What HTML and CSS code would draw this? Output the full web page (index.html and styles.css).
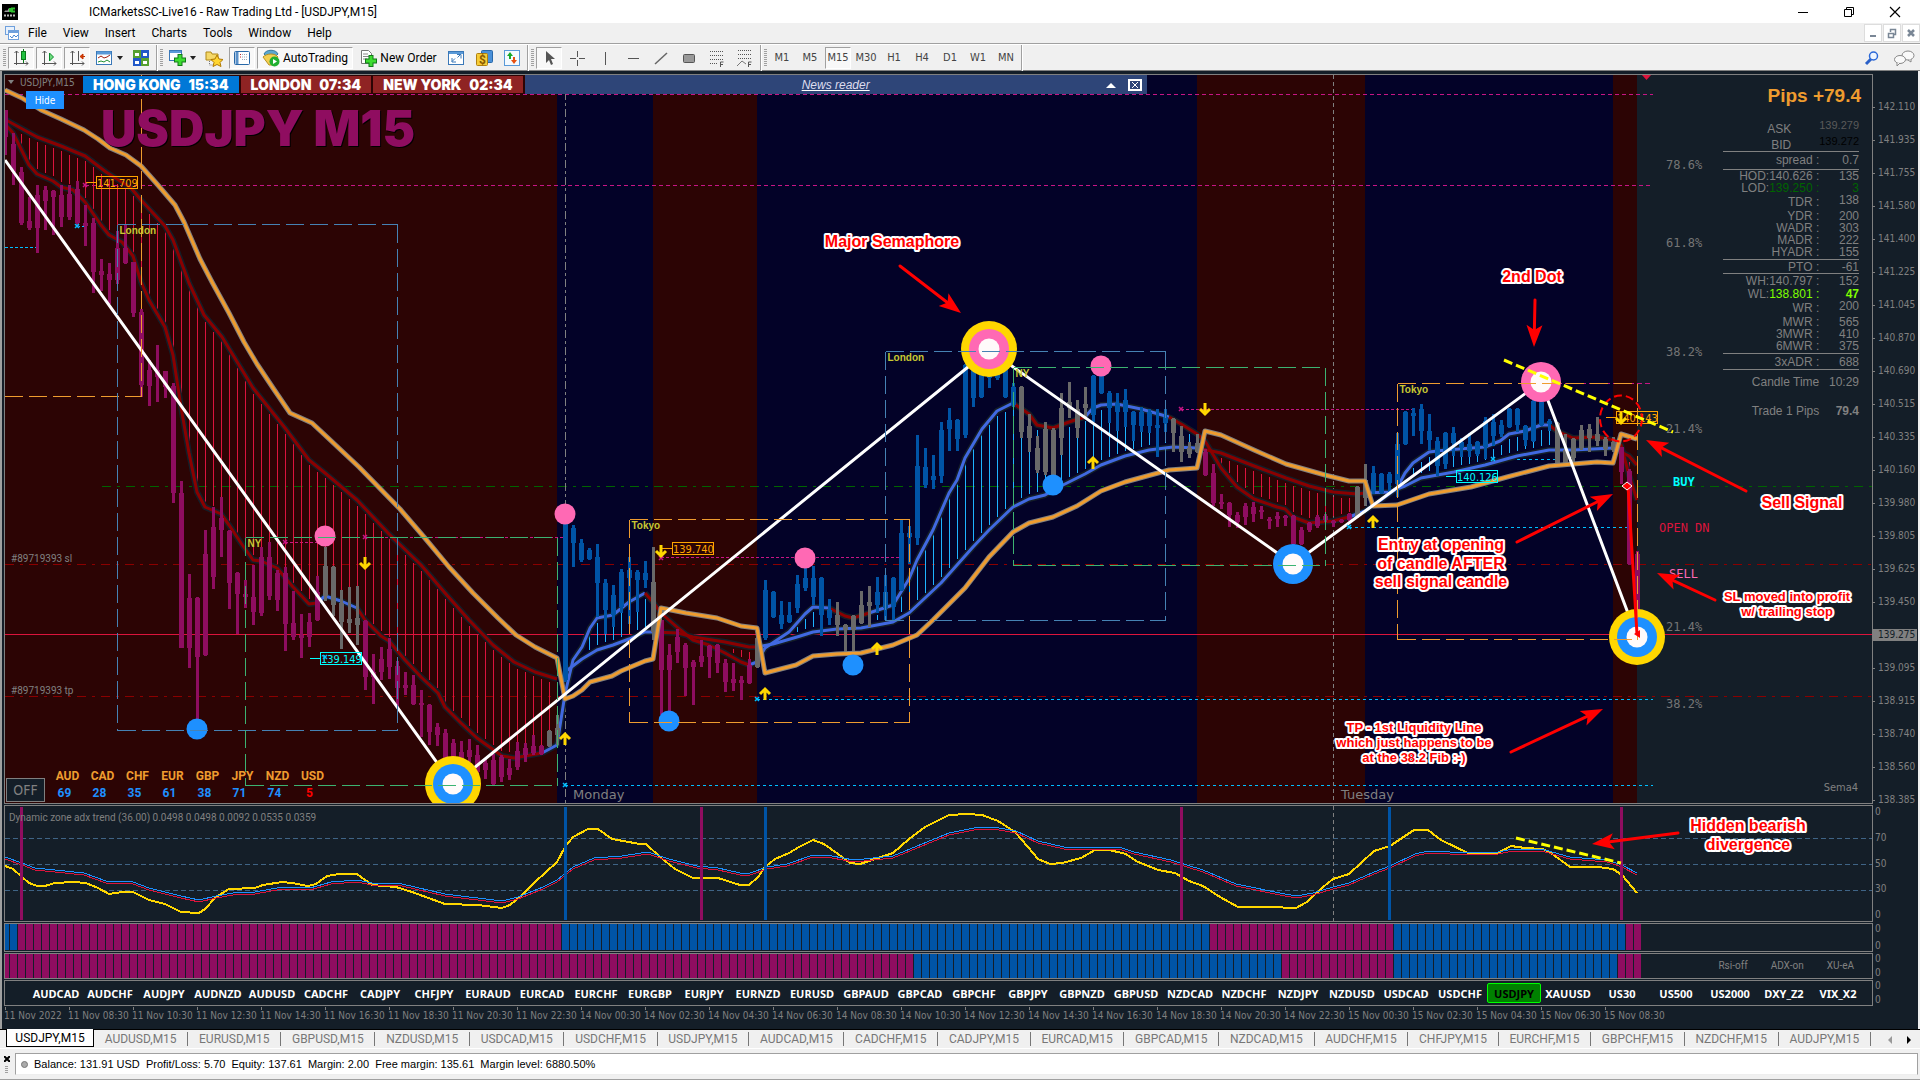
FILE: index.html
```html
<!DOCTYPE html>
<html lang="en">
    <head>
        <meta charset="utf-8" />
        <meta name="viewport" content="width=device-width, initial-scale=1" />
        <title>ICMarketsSC-Live16 - Raw Trading Ltd - [USDJPY,M15]</title>
        <link rel="stylesheet" href="styles.css">
    </head>
    <body>
        <div id="titlebar">
            <svg class="logo" width="16" height="16" viewBox="0 0 16 16"><rect width="16" height="16" fill="#000"/><path d="M2 8l2-2 1 1 2-3v4z" fill="#999"/><path d="M8 4v4M13 4.500h-3v3h3" stroke="#2fc12f" stroke-width="2" fill="none"/><path d="M2 11.500h12" stroke="#bbb" stroke-width="2" stroke-dasharray="2 1"/></svg>
            <div id="caption">ICMarketsSC-Live16 - Raw Trading Ltd - [USDJPY,M15]</div>
            <div class="winbuttons">
                <button aria-label="Minimize"><svg width="12" height="12"><path d="M1 6.500h10" stroke="#000"/></svg></button>
                <button aria-label="Restore"><svg width="12" height="12"><path d="M1.500 3.500h7v7h-7zM3.500 3V1.500h7v7H9" stroke="#000" fill="none"/></svg></button>
                <button aria-label="Close"><svg width="12" height="12"><path d="M1 1l10 10M11 1L1 11" stroke="#000" stroke-width="1.200"/></svg></button>
            </div>
        </div>
        <div id="menubar">
            <svg width="16" height="16"><rect x="1.500" y="1.500" width="9" height="8" fill="#e8f1fc" stroke="#6fa0dc"/><rect x="4.500" y="5.500" width="10" height="9" fill="#fff" stroke="#6fa0dc"/><path d="M5 7h9" stroke="#6fa0dc" stroke-width="2"/><path d="M6 11l2 2 2-3 2 2 2-2" stroke="#4a86d0" fill="none"/></svg>
            <a href="#">File</a><a href="#">View</a><a href="#">Insert</a><a href="#">Charts</a><a href="#">Tools</a><a href="#">Window</a><a href="#">Help</a>
            <div class="mdibuttons">
                <button aria-label="Minimize chart"><svg width="12" height="12"><path d="M3 9h6" stroke="#7a8796" stroke-width="2"/></svg></button>
                <button aria-label="Restore chart"><svg width="12" height="12"><path d="M2.500 6.500h5v4h-5zM4.500 5V2.500h5v5H8" stroke="#7a8796" stroke-width="1.500" fill="none"/></svg></button>
                <button aria-label="Close chart"><svg width="12" height="12"><path d="M3 3l6 6M9 3L3 9" stroke="#7a8796" stroke-width="2.500"/></svg></button>
            </div>
        </div>
        <div id="toolbar">
            <span class="grip"></span>
            <button class="on" aria-label="Candlesticks"><svg width="18" height="18"><path d="M4.500 2v14M2 14.500h14M2.500 4l2-2 2 2M14 12.500l2 2-2 2" stroke="#555" fill="none"/><path d="M11.500 0v14" stroke="#0a7a1a"/><rect x="9.500" y="2.500" width="4" height="8" fill="#22c040" stroke="#0a7a1a"/></svg></button>
            <button class="on" aria-label="Auto scroll"><svg width="18" height="18"><path d="M4.500 2v14M2 14.500h14M2.500 4l2-2 2 2M14 12.500l2 2-2 2" stroke="#555" fill="none"/><path d="M9.500 4v8l4-4z" fill="#6fdc80" stroke="#0a8a2a"/></svg></button>
            <button class="on" aria-label="Chart shift"><svg width="18" height="18"><path d="M4.500 2v14M2 14.500h14M2.500 4l2-2 2 2M14 12.500l2 2-2 2M10.500 2v10" stroke="#555" fill="none"/><path d="M17 7.500h-3M15 5l-3 2.500 3 2.500z" stroke="#c03000" fill="#e04000"/></svg></button>
            <button class="drop" aria-label="Templates"><svg width="18" height="18"><rect x="1.500" y="2.500" width="15" height="13" fill="#fff" stroke="#3a78b8"/><path d="M2 4h14" stroke="#5a9ad8" stroke-width="3"/><path d="M3 9l3-2 3 2 3-1 3-2" stroke="#a02010" fill="none"/><path d="M3 13l3-1 3 1 3-2 3 2" stroke="#209030" fill="none"/></svg><i class="caret"></i></button>
            <button aria-label="Tile windows"><svg width="18" height="18"><rect x="1" y="1" width="8" height="8" fill="#56a030"/><rect x="9" y="1" width="8" height="8" fill="#2058c8"/><rect x="1" y="9" width="8" height="8" fill="#2058c8"/><rect x="9" y="9" width="8" height="8" fill="#56a030"/><path d="M3 5.500h4M11 5.500h4M3 13.500h4M11 13.500h4" stroke="#fff" stroke-width="3"/></svg></button>
            <span class="sep"></span><span class="grip"></span>
            <button class="drop" aria-label="Indicators"><svg width="18" height="18"><rect x="1.500" y="1.500" width="12" height="10" fill="#fff" stroke="#3a78b8"/><path d="M2 3h11" stroke="#5a9ad8" stroke-width="2"/><path d="M12 5v12M6 11h12" stroke="#107818" stroke-width="5"/><path d="M12 6v10M7 11h10" stroke="#3ddc30" stroke-width="3"/></svg><i class="caret"></i></button>
            <button aria-label="Navigator"><svg width="18" height="18"><path d="M1 3h5l1 2h6v6H1z" fill="#f5d868" stroke="#b08818"/><path d="M4.500 12v4h4" stroke="#777" stroke-dasharray="1 1" fill="none"/><path d="M12 6l2 4 4 .5-3 3 1 4-4-2-4 2 1-4-3-3 4-.5z" fill="#ffd530" stroke="#b07800"/></svg></button>
            <button class="on" aria-label="Terminal"><svg width="18" height="18"><rect x="1.500" y="2.500" width="15" height="13" rx="1" fill="#fff" stroke="#2868a8"/><path d="M4 3v12" stroke="#5a90c8" stroke-width="3"/><path d="M7 5.500h1M7 8h1" stroke="#c02020"/><path d="M9 5.500h6M9 8h6M9 10.500h6" stroke="#9ab" stroke-dasharray="1 1"/></svg></button>
            <button class="on auto"><svg width="18" height="18"><path d="M2 5c2-5 12-5 14 0l-2 2H4z" fill="#5aa8d0" stroke="#38789c"/><path d="M1 8c4-4 12-4 15 0l-5 8H7z" fill="#f3cf52" stroke="#b89020"/><circle cx="12.500" cy="12.500" r="5" fill="#20b030"/><path d="M11 10v5l4-2.500z" fill="#fff"/></svg>AutoTrading</button>
            <button class="order"><svg width="18" height="18"><path d="M2.500 1.500h7l3 3v10h-10z" fill="#fff" stroke="#777"/><path d="M4 5h5M4 7.500h6M4 10h4" stroke="#888"/><path d="M12 6v12M6 12h12" stroke="#107818" stroke-width="5"/><path d="M12 7v10M7 12h10" stroke="#3ddc30" stroke-width="3"/></svg>New Order</button>
            <button aria-label="Full screen"><svg width="18" height="18"><rect x="1.500" y="2.500" width="15" height="13" fill="#fff" stroke="#3a78b8"/><path d="M2 4h14" stroke="#5a9ad8" stroke-width="2"/><path d="M5 12.500l3-3M5 9v4h4M10.500 8.500l3-3M10 5.500h4v4" stroke="#3a78b8" fill="none"/></svg></button>
            <button aria-label="Strategy tester"><svg width="18" height="18"><rect x="6.500" y="1.500" width="11" height="12" rx="1" fill="#4a90d8" stroke="#2868a8"/><rect x="1.500" y="4.500" width="11" height="12" rx="1" fill="#f5cc38" stroke="#b08010"/><text x="4" y="15" font-size="12" font-weight="bold" fill="#8a5a00">$</text></svg></button>
            <button aria-label="Options"><svg width="18" height="18"><rect x="1.500" y="1.500" width="15" height="15" fill="#f4faff" stroke="#5a9ad8"/><path d="M7 3l3 4H8v3H6V7H4z" fill="#18a828"/><path d="M11 15l3-4h-2V8h-2v3H8z" fill="#e85010"/></svg></button>
            <span class="sep"></span><span class="grip"></span>
            <button class="on" aria-label="Cursor"><svg width="18" height="18"><path d="M6 2v12l3-3 2 5 2-1-2-5h4z" fill="#555"/></svg></button>
            <button aria-label="Crosshair"><svg width="18" height="18"><path d="M9.500 2v6M9.500 11v6M2 9.500h6M11 9.500h6" stroke="#555"/></svg></button>
            <button aria-label="Vertical line"><svg width="18" height="18"><path d="M9.500 3v13" stroke="#555"/></svg></button>
            <button aria-label="Horizontal line"><svg width="18" height="18"><path d="M4 9.500h11" stroke="#555"/></svg></button>
            <button aria-label="Trend line"><svg width="18" height="18"><path d="M3 15L15 4" stroke="#666" stroke-width="1.500"/></svg></button>
            <button aria-label="Rectangle"><svg width="18" height="18"><rect x="3.500" y="5.500" width="11" height="8" rx="1" fill="#999" stroke="#555"/></svg></button>
            <button aria-label="Fibonacci"><svg width="18" height="18"><path d="M2 2.500h13M2 6.500h13M2 10.500h13M2 14.500h8" stroke="#555" stroke-dasharray="1 1"/><path d="M12.500 18v-5h3M12 15.500h3" stroke="#555" fill="none"/></svg></button>
            <button aria-label="Fibonacci fan"><svg width="18" height="18"><path d="M2 1.500h13M2 5.500h13M2 9.500h13" stroke="#555" stroke-dasharray="1 1"/><path d="M1 17l5-5 4 3" stroke="#777" fill="none"/><path d="M12.500 18v-5h3M12 15.500h3" stroke="#555" fill="none"/></svg></button>
            <span class="sep"></span><span class="grip"></span>
            <button class="tf">M1</button><button class="tf">M5</button><button class="tf on">M15</button><button class="tf">M30</button><button class="tf">H1</button><button class="tf">H4</button><button class="tf">D1</button><button class="tf">W1</button><button class="tf">MN</button>
            <span class="sep"></span>
            <div class="right">
                <button aria-label="Search"><svg width="18" height="18"><path d="M3 15l5-5" stroke="#2a60c8" stroke-width="3"/><circle cx="10.500" cy="7" r="4" fill="#eef5ff" stroke="#2a68d8" stroke-width="1.500"/></svg></button>
                <button aria-label="Messages"><svg width="22" height="18"><ellipse cx="15" cy="6.500" rx="6" ry="4.500" fill="#fafafa" stroke="#888"/><ellipse cx="7" cy="10.500" rx="5.500" ry="4" fill="#fafafa" stroke="#888"/><path d="M4 14v3l3-3M18 10v3l-3-2" stroke="#888" fill="#fafafa"/></svg></button>
            </div>
        </div>

        <div id="chart">
            <div class="pane main">
                <div class="plot">
                    <svg id="price" class="canvas"></svg>
                    <div class="symbolname"><i class="caret"></i>USDJPY,M15</div>
                    <div id="clocks">
                        <div class="clock open">HONG KONG <span>15:34</span></div>
                        <div class="clock">LONDON <span>07:34</span></div>
                        <div class="clock">NEW YORK <span>02:34</span></div>
                        <div id="news"><a href="#">News reader</a>
                            <button aria-label="Collapse"><svg width="10" height="6"><path d="M0 6l5-5 5 5z" fill="#fff"/></svg></button>
                            <button aria-label="Close news"><svg width="14" height="12"><rect x="1" y="1" width="12" height="10" fill="none" stroke="#fff" stroke-width="2"/><path d="M4 3l6 6M10 3L4 9" stroke="#fff"/></svg></button>
                        </div>
                    </div>
                    <button id="hide">Hide</button>
                    <div id="bigname">USDJPY M15</div>
                    <div id="strength">
                        <button id="off">OFF</button>
                        <table>
                            <tr><th>AUD</th><th>CAD</th><th>CHF</th><th>EUR</th><th>GBP</th><th>JPY</th><th>NZD</th><th>USD</th></tr>
                            <tr><td>69</td><td>28</td><td>35</td><td>61</td><td>38</td><td>71</td><td>74</td><td class="weak">5</td></tr>
                        </table>
                    </div>
                    <div id="stats">
                        <div class="pips">Pips +79.4</div>
                        <table>
                            <tr class="h16 quote"><th>ASK</th><td class="dim">139.279</td></tr>
                            <tr class="h16 quote"><th>BID</th><td class="black">139.272</td></tr>
                            <tr class="h18 line"><th>spread :</th><td>0.7</td></tr>
                            <tr class="h12 line"><th>HOD:140.626 :</th><td>135</td></tr>
                            <tr class="h12 green"><th><span>LOD:</span>139.250 :</th><td>3</td></tr>
                            <tr class="h16"><th>TDR :</th><td class="up">138</td></tr>
                            <tr class="h12"><th>YDR :</th><td>200</td></tr>
                            <tr class="h12"><th>WADR :</th><td>303</td></tr>
                            <tr class="h12"><th>MADR :</th><td>222</td></tr>
                            <tr class="h14"><th>HYADR :</th><td>155</td></tr>
                            <tr class="h14 line"><th>PTO :</th><td>-61</td></tr>
                            <tr class="h14 line"><th>WH:140.797 :</th><td>152</td></tr>
                            <tr class="h12 lime"><th><span>WL:</span>138.801 :</th><td>47</td></tr>
                            <tr class="h16"><th>WR :</th><td class="up">200</td></tr>
                            <tr class="h12"><th>MWR :</th><td>565</td></tr>
                            <tr class="h12"><th>3MWR :</th><td>410</td></tr>
                            <tr class="h14"><th>6MWR :</th><td>375</td></tr>
                            <tr class="h16 line"><th>3xADR :</th><td>688</td></tr>
                            <tr class="h24 line"><th>Candle Time</th><td>10:29</td></tr>
                            <tr class="h34"><th>Trade 1 Pips</th><td class="bold">79.4</td></tr>
                        </table>
                    </div>
                    <div class="sema">Sema4</div>
                </div>
                <ul class="scale prices">
                    <li>142.110</li><li>141.935</li><li>141.755</li><li>141.580</li><li>141.400</li><li>141.225</li><li>141.045</li><li>140.870</li><li>140.690</li><li>140.515</li><li>140.335</li><li>140.160</li><li>139.980</li><li>139.805</li><li>139.625</li><li>139.450</li><li class="current">139.275</li><li>139.095</li><li>138.915</li><li>138.740</li><li>138.560</li><li>138.385</li>
                </ul>
            </div>
            <div class="pane adx">
                <div class="plot">
                    <svg id="adx" class="canvas"></svg>
                    <div class="indicatorname">Dynamic zone adx trend (36.00) 0.0498 0.0498 0.0092 0.0535 0.0359</div>
                </div>
                <ul class="scale"><li>0</li><li>70</li><li>50</li><li>30</li><li>0</li></ul>
            </div>
            <div class="pane stripe tall">
                <div class="plot"><svg id="stripe1" class="canvas"></svg></div>
                <ul class="scale"><li>0</li><li>0</li></ul>
            </div>
            <div class="pane stripe">
                <div class="plot">
                    <svg id="stripe2" class="canvas"></svg>
                    <div class="switches"><span>Rsi-off</span><span>ADX-on</span><span>XU-eA</span></div>
                </div>
                <ul class="scale"><li>0</li><li>0</li></ul>
            </div>
            <div class="pane stripe">
                <div class="plot symbols" id="symbols"></div>
                <ul class="scale"><li>0</li><li>0</li></ul>
            </div>
            <div id="times"></div>
        </div>

        <div id="tabs">
            <a class="active" href="#">USDJPY,M15</a>
            <a href="#">AUDUSD,M15</a><a href="#">EURUSD,M15</a><a href="#">GBPUSD,M15</a><a href="#">NZDUSD,M15</a><a href="#">USDCAD,M15</a><a href="#">USDCHF,M15</a><a href="#">USDJPY,M15</a><a href="#">AUDCAD,M15</a><a href="#">CADCHF,M15</a><a href="#">CADJPY,M15</a><a href="#">EURCAD,M15</a><a href="#">GBPCAD,M15</a><a href="#">NZDCAD,M15</a><a href="#">AUDCHF,M15</a><a href="#">CHFJPY,M15</a><a href="#">EURCHF,M15</a><a href="#">GBPCHF,M15</a><a href="#">NZDCHF,M15</a><a href="#">AUDJPY,M15</a>
            <div class="arrows">
                <button aria-label="Scroll left"><svg width="6" height="8"><path d="M5 0v8L1 4z" fill="#999"/></svg></button>
                <button aria-label="Scroll right"><svg width="6" height="8"><path d="M1 0v8l4-4z" fill="#000"/></svg></button>
            </div>
        </div>
        <div id="status">
            <div class="closer"><svg width="6" height="6"><path d="M0 0l6 6M6 0L0 6" stroke="#000" stroke-width="2"/></svg><span class="grip"></span></div>
            <div class="balance"><i class="bullet"></i>Balance: 131.91 USD&nbsp; Profit/Loss: 5.70&nbsp; Equity: 137.61&nbsp; Margin: 2.00&nbsp; Free margin: 135.61&nbsp; Margin level: 6880.50%</div>
        </div>
        <script src="chart.js"></script>
    </body>
</html>
```
FILE: styles.css
```css
* {
    box-sizing: border-box;
}
body {
    margin: 0px;
    height: 100vh;
    display: flex;
    flex-direction: column;
    overflow: hidden;
    background: #f0f0f0;
    color: #000;
    font: 12px Roboto, "Noto Sans", sans-serif;
}
button {
    border: 0px;
    padding: 0px;
    background: none;
    color: inherit;
    font: inherit;
}
a {
    color: inherit;
    text-decoration: none;
}
ul {
    list-style: none;
    margin: 0px;
    padding: 0px;
}
svg {
    display: block;
}
.caret {
    display: inline-block;
    border: 3px solid transparent;
    border-top: 4px solid #222;
    border-bottom: 0px;
}
#titlebar {
    height: 23px;
    background: #fff;
    display: flex;
    align-items: center;
    padding-left: 2px;
}
#caption {
    margin-left: 71px;
    flex: 1;
}
.winbuttons {
    display: flex;
    padding-right: 2px;
}
.winbuttons button {
    width: 46px;
    height: 22px;
    display: flex;
    align-items: center;
    justify-content: center;
}
#menubar {
    height: 20px;
    display: flex;
    align-items: center;
    padding-left: 4px;
}
#menubar > a {
    padding: 0px 8px;
}
#menubar > a:hover {
    background: #cce8ff;
}
.mdibuttons {
    margin-left: auto;
    display: flex;
    gap: 1px;
}
.mdibuttons button {
    width: 18px;
    height: 18px;
    background: #fff;
    border: 1px solid #ddd;
    display: flex;
    align-items: center;
    justify-content: center;
}

/* toolbar */
#toolbar {
    height: 28px;
    border-top: 1px solid #a0a0a0;
    border-bottom: 1px solid #808080;
    box-shadow: inset 0px 1px 0px #fff;
    display: flex;
    align-items: center;
    padding: 1px 0px 0px 2px;
}
#toolbar button {
    width: 26px;
    height: 22px;
    margin: 0px 1px;
    display: flex;
    align-items: center;
    justify-content: center;
    border: 1px solid transparent;
    white-space: nowrap;
}
#toolbar button.on {
    background: #f8f8f8;
    border-color: #a0a0a0 #fff #fff #a0a0a0;
}
#toolbar button.drop {
    width: 34px;
    gap: 4px;
}
#toolbar button.auto {
    width: 96px;
    gap: 3px;
}
#toolbar button.order {
    width: 86px;
    gap: 3px;
}
#toolbar button.tf {
    color: #444;
    font: 11px "DejaVu Sans Condensed", "DejaVu Sans", sans-serif;
}
.grip {
    width: 3px;
    height: 18px;
    margin: 0px 1px;
    background: repeating-linear-gradient(#a0a0a0 0px 1px, transparent 1px 2px);
}
.sep {
    width: 2px;
    height: 26px;
    margin: 0px 1px;
    border-left: 1px solid #a0a0a0;
    border-right: 1px solid #fff;
}
#toolbar .right {
    margin-left: auto;
    display: flex;
    gap: 4px;
    padding-right: 2px;
}

/* chart window */
#chart {
    flex: 1;
    min-height: 0px;
    display: flex;
    flex-direction: column;
    gap: 1px;
    padding: 3px 0px 2px 2px;
    background: #141e28;
    border-left: 2px solid #a0a0a0;
    border-right: 2px solid #f0f0f0;
    color: #808080;
    font: 11px "DejaVu Sans Condensed", "DejaVu Sans", sans-serif;
}
.pane {
    display: flex;
}
.main {
    flex: 1;
    min-height: 0px;
}
.adx {
    height: 117px;
}
.stripe {
    height: 26px;
}
.stripe.tall {
    height: 29px;
}
.plot {
    flex: 1;
    min-width: 0px;
    position: relative;
    border: 1px solid #808080;
    overflow: hidden;
}
.canvas {
    width: 100%;
    height: 100%;
}
.scale {
    width: 45px;
    display: flex;
    flex-direction: column;
    justify-content: space-between;
    font-size: 10px;
    line-height: 12px;
}
.scale li {
    padding-left: 2px;
}
.main .scale {
    padding-top: 27px;
    margin-bottom: -2px;
}
.adx .scale {
    padding: 1px 0px;
}
.prices li {
    display: flex;
    align-items: center;
    padding: 0px;
}
.prices li::before {
    content: "";
    width: 2px;
    margin-right: 3px;
    border-top: 1px solid #808080;
}
.prices li.current {
    background: #808080;
    color: #141e28;
    margin-right: 1px;
}
.symbolname, .indicatorname {
    position: absolute;
    left: 3px;
    top: 1px;
    font: 10px/14px "DejaVu Sans Condensed", sans-serif;
}
.symbolname .caret {
    border-top-color: #808080;
    margin: 0px 6px 2px 0px;
}
.indicatorname {
    top: 5px;
    left: 4px;
    font: 10px/14px Roboto, sans-serif;
}
#clocks {
    position: absolute;
    left: 78px;
    top: 0px;
    height: 19px;
    display: flex;
    align-items: center;
    gap: 2px;
    color: #fff;
    font: 900 14px Inter, "Open Sans", sans-serif;
}
.clock {
    height: 17px;
    line-height: 17px;
    padding: 0px 10px;
    background: #8f2323;
    white-space: nowrap;
}
.clock span {
    margin-left: 5px;
}
.clock.open {
    background: #0078d7;
}
#news {
    width: 622px;
    height: 19px;
    padding-left: 48px;
    background: #2e4578;
    display: flex;
    align-items: center;
    font: italic 12px "Liberation Sans", Arial, sans-serif;
    text-decoration: underline;
}
#news a {
    margin: 0px auto;
    color: #dde;
}
#news button {
    width: 24px;
    display: flex;
    justify-content: center;
}
#hide {
    position: absolute;
    left: 21px;
    top: 16px;
    width: 38px;
    height: 18px;
    background: #1e90ff;
    color: #fff;
    font-size: 10px;
}
#bigname {
    position: absolute;
    left: 96px;
    top: 24px;
    color: #8f0d60;
    text-shadow: 1px 1px 0px #000;
    font: 900 49px/60px Inter, "Open Sans", sans-serif;
    white-space: nowrap;
}
#strength {
    position: absolute;
    left: 1px;
    bottom: 1px;
    display: flex;
    align-items: flex-end;
}
#off {
    width: 39px;
    height: 24px;
    border: 1px solid #808080;
    background: #141e28;
    font-size: 14px;
}
#strength table {
    margin-left: 5px;
    border-collapse: collapse;
    font: bold 12px/17px Roboto, sans-serif;
}
#strength th, #strength td {
    width: 35px;
    padding: 0px;
    text-align: center;
    color: #ef9c2f;
}
#strength td {
    padding-right: 6px;
    color: #1e90ff;
}
#strength td.weak {
    color: #f00;
}
#stats {
    position: absolute;
    right: 11px;
    top: 10px;
    width: 138px;
    font: 12px/12px "Liberation Sans", Arial, sans-serif;
}
.pips {
    height: 34px;
    line-height: 22px;
    font-size: 19px;
    font-weight: bold;
    text-align: right;
    color: #ef9c2f;
    white-space: nowrap;
}
#stats table {
    width: 136px;
    border-collapse: collapse;
}
#stats th, #stats td {
    padding: 0px;
    text-align: right;
    font-weight: normal;
    white-space: nowrap;
}
#stats th {
    padding-right: 0px;
}
#stats td {
    width: 38px;
}
#stats .quote th {
    padding-right: 28px;
    vertical-align: bottom;
}
#stats .line {
    border-top: 1px solid #808080;
}
#stats .h12 {
    height: 12px;
}
#stats .h14 {
    height: 14px;
}
#stats .h16 {
    height: 16px;
}
#stats .h18 {
    height: 18px;
}
#stats .h24 {
    height: 24px;
}
#stats .h34 {
    height: 34px;
}
#stats .up, #stats .quote td {
    vertical-align: top;
}
#stats .dim {
    color: #5a5a5a;
    font-size: 11px;
}
#stats .black {
    color: #000;
    font-size: 11px;
}
#stats .bold {
    font-weight: bold;
}
#stats .green {
    color: #006400;
}
#stats .lime {
    color: #7fff00;
}
#stats .lime td {
    font-weight: bold;
}
#stats th span {
    color: #808080;
}
.sema {
    position: absolute;
    right: 14px;
    bottom: 9px;
}
.switches {
    position: absolute;
    right: 18px;
    top: 5px;
    display: flex;
    gap: 23px;
    font: 10px/14px Roboto, sans-serif;
}
.symbols {
    display: flex;
    align-items: center;
    padding-left: 24px;
}
.symbols button {
    width: 54px;
    height: 20px;
    color: #fff;
    white-space: nowrap;
    font: bold 11px "Noto Sans", sans-serif;
}
.symbols button.current {
    color: #000;
    background: #008000;
    border: 1px solid #00ff00;
    border-radius: 2px;
}
#times {
    height: 20px;
    display: flex;
    font-size: 10px;
}
#times span {
    width: 64px;
    flex: none;
    padding-top: 3px;
    white-space: nowrap;
    background: linear-gradient(#808080, #808080) 1px 0px / 1px 3px no-repeat;
}

/* svg parts */
.level {
    fill: none;
    stroke-width: 1px;
    shape-rendering: crispEdges;
}
.price-tag, .session {
    fill: #c8c832;
    font: bold 10px "Liberation Sans", Arial, sans-serif;
}
.price-tag {
    font: 11px "DejaVu Sans Condensed", sans-serif;
}
.order-tag {
    fill: #808080;
    font: 10px Roboto, sans-serif;
}
.day {
    fill: #808080;
    font: 13px "DejaVu Sans", sans-serif;
}
.fib {
    fill: #757575;
    font: 12px "DejaVu Sans Mono", monospace;
}
.fib.strong {
    font-weight: bold;
}
.note {
    fill: #f00;
    stroke: #fff;
    stroke-width: 4px;
    stroke-linejoin: round;
    paint-order: stroke;
    text-anchor: middle;
    font: bold 16px "Liberation Sans", Arial, sans-serif;
}
.note.small {
    font-size: 13px;
}

/* tabs and status */
#tabs {
    height: 20px;
    display: flex;
    border-top: 1px solid #000;
    padding-left: 6px;
    color: #777;
    box-shadow: inset 0px -1px 0px #fff;
}
#tabs a {
    flex: 1 1 auto;
    height: 14px;
    margin-top: 2px;
    line-height: 14px;
    text-align: center;
    border-right: 1px solid #777;
}
#tabs a.active {
    flex: none;
    width: 88px;
    height: 18px;
    margin: -1px 0px 0px 0px;
    line-height: 19px;
    background: #fff;
    color: #000;
    border: 1px solid #000;
    border-top: 0px;
}
#tabs .arrows {
    width: 49px;
    display: flex;
    justify-content: flex-end;
    gap: 13px;
    padding-right: 8px;
}
#status {
    height: 31px;
    display: flex;
    padding: 4px 2px 2px 0px;
    border-bottom: 1px solid #a0a0a0;
}
.closer {
    width: 15px;
    padding: 3px 0px 0px 4px;
}
.closer .grip {
    display: block;
    height: 8px;
    margin-top: 4px;
}
.balance {
    flex: 1;
    background: #fff;
    border: 1px solid #a0a0a0;
    border-bottom-color: #eee;
    height: 22px;
    line-height: 20px;
    padding-left: 5px;
    font-family: "Liberation Sans", Arial, sans-serif;
    font-size: 11px;
}
.bullet {
    display: inline-block;
    width: 7px;
    height: 7px;
    margin-right: 6px;
    border-radius: 50%;
    background: #aaa;
    border: 1px solid #777;
}
```
FILE: chart.js
```javascript
var PURPLE = '#8f0d60', BLUE = '#0054a6', GRAY = '#696969';
var STEP = 8, FIRST = 5.5;

// high, low, body top, body bottom
var bars = [
    110,155,110,137, 133,185,144,172, 167,225,172,223, 197,230,221,228, 185,253,195,228,
    186,230,190,201, 190,235,191,197, 185,227,195,217, 185,220,194,217, 181,227,189,223,
    205,246,223,226, 218,293,223,272, 259,291,271,275, 263,304,274,280, 231,284,248,280,
    225,264,248,263, 262,317,262,313, 309,397,312,385, 360,406,370,386, 345,402,370,377,
    371,398,371,387, 383,503,386,493, 481,648,493,648, 574,668,598,648, 597,720,598,657,
    530,656,554,655, 507,589,527,577, 497,557,518,530, 530,609,531,583, 572,634,573,594,
    580,608,594,597, 565,625,597,612, 547,616,557,613, 542,600,557,596, 570,611,573,600,
    567,651,573,624, 591,640,623,637, 614,658,635,638, 613,647,622,637, 576,621,592,620,
    547,601,566,596, 566,616,567,605, 590,649,603,622, 587,633,619,623, 586,645,618,625,
    620,690,621,677, 654,704,672,677, 647,680,659,672, 638,679,649,667, 661,707,666,688,
    672,695,685,688, 675,705,685,704, 690,737,703,705, 704,745,705,732, 723,746,727,735,
    729,760,733,758, 739,768,743,766, 741,773,752,765, 739,762,750,757, 745,777,755,772,
    759,779,763,770, 754,785,760,784, 755,782,757,777, 759,780,768,775, 742,770,751,767,
    743,762,748,755, 735,755,746,753, 745,755,746,754, 730,747,731,746, 715,745,728,735,
    523,682,524,680, 525,567,528,543, 539,562,543,560, 548,560,550,559, 544,617,557,583,
    579,634,583,610, 585,627,595,615, 569,613,572,607, 557,624,570,578, 570,612,572,580,
    561,588,573,580, 547,640,582,632, 620,715,620,670, 644,715,655,670, 629,663,637,652,
    643,696,645,668, 660,705,662,667, 640,667,656,662, 645,678,646,657, 644,673,645,663,
    659,692,663,682, 663,691,679,683, 676,700,680,683, 659,684,665,683, 637,668,638,667,
    580,640,590,638, 591,618,592,617, 601,629,615,624, 602,623,615,622, 575,613,584,608,
    568,591,578,588, 566,605,578,597, 577,636,578,615, 599,625,610,618, 602,636,615,625,
    624,653,625,630, 615,655,616,630, 591,624,605,623, 586,627,602,606, 577,613,592,605,
    575,620,592,608, 577,620,578,607, 519,591,533,590, 526,564,533,537, 435,545,466,538,
    448,488,467,485, 455,489,476,480, 422,483,430,476, 408,451,420,429, 419,451,420,439,
    364,438,365,435, 367,407,370,398, 363,398,364,397, 363,388,363,378, 363,380,364,378,
    367,398,368,397, 383,407,387,405, 386,438,387,432, 414,452,426,438, 436,473,448,470,
    422,475,429,472, 428,476,430,475, 393,455,408,438, 382,418,402,408, 400,438,409,428,
    387,417,404,408, 375,422,376,415, 375,394,376,393, 391,423,393,408, 393,431,403,412,
    389,427,400,412, 411,441,412,425, 407,432,412,426, 409,433,412,426, 409,457,425,428,
    409,432,417,423, 418,452,419,433, 426,462,436,452, 442,458,448,454, 434,453,443,452,
    449,476,452,475, 464,506,473,503, 494,509,502,504, 502,527,503,515, 512,528,515,522,
    503,525,506,517, 502,522,507,514, 506,519,510,512, 517,529,519,521, 512,527,516,519,
    515,526,516,518, 515,545,516,544, 527,545,530,544, 522,532,523,530, 515,528,517,526,
    514,522,516,520, 520,527,521,523, 519,523,520,522, 513,521,514,520, 486,518,487,517,
    464,506,480,498, 466,494,473,491, 473,494,474,493, 472,492,474,483, 433,497,444,484,
    411,445,412,444, 408,436,413,416, 404,444,409,431, 414,450,431,440, 437,476,441,466,
    432,469,433,464, 427,456,433,443, 438,457,442,448, 433,457,444,451, 441,456,442,454,
    417,459,421,447, 414,446,422,436, 420,437,425,434, 408,428,409,427, 408,432,409,425,
    425,446,426,440, 400,442,401,441, 401,426,402,425, 419,431,421,424, 422,464,423,463,
    434,464,450,463, 438,463,439,458, 425,450,430,448, 424,452,429,438, 417,446,434,441,
    437,456,439,449, 437,452,442,450, 447,484,447,472, 469,565,471,564, 551,634,554,633
];

// last bar index of every colour run
var barRuns = [[39, PURPLE], [44, GRAY], [67, PURPLE], [69, GRAY], [80, BLUE], [81, GRAY], [93, PURPLE], [94, GRAY],
    [103, BLUE], [108, GRAY], [126, BLUE], [135, GRAY], [145, BLUE], [149, GRAY], [168, PURPLE], [170, GRAY],
    [193, BLUE], [201, GRAY], [204, PURPLE]];

var DN = '#8b0000', UP = '#4169e1';
var fast = [
    [DN, [6,125, 13,133, 29,165, 37,174, 53,181, 61,187, 73,190, 85,202, 101,225, 109,235, 122,242, 133,256, 141,282, 149,300, 165,327, 173,355, 181,407, 189,453, 197,492, 205,507, 221,514, 229,525, 241,543, 253,560, 261,561, 277,568, 293,587, 309,604, 317,603]],
    [UP, [317,603, 325,596, 341,601, 357,608]],
    [DN, [357,608, 365,620, 381,636, 389,641, 405,660, 421,677, 438,693, 445,707, 461,723, 477,738, 502,756, 514,758, 542,753]],
    [UP, [542,753, 557,745, 565,694, 573,660, 582,647, 590,628, 597,618, 613,615, 629,602, 645,593]],
    [DN, [645,593, 653,602, 661,613, 678,628, 693,640, 709,645, 725,653, 741,662, 749,665]],
    [UP, [749,665, 757,662, 765,648, 789,632, 805,614, 813,607, 829,608]],
    [DN, [829,608, 845,616, 853,618, 869,613]],
    [UP, [869,613, 893,605, 901,592, 909,579, 917,560, 933,530, 949,493, 957,480, 965,458, 982,429, 997,411, 1013,403]],
    [DN, [1013,403, 1029,414, 1037,425, 1053,428, 1069,422, 1085,417]],
    [UP, [1085,417, 1093,408, 1101,405, 1117,404, 1141,409, 1169,417]],
    [DN, [1169,417, 1181,424, 1197,434, 1205,441, 1221,468, 1237,487, 1254,499, 1277,507, 1285,509, 1293,517, 1309,523, 1333,521, 1349,517]],
    [UP, [1349,517, 1365,511, 1381,500, 1397,488, 1405,473, 1413,463, 1429,452, 1446,450, 1485,447, 1500,441, 1509,434, 1525,431, 1541,425, 1549,425]],
    [DN, [1549,425, 1557,431, 1573,438, 1597,437, 1613,440, 1621,445, 1629,475, 1637,500]]
];
var slow = [
    [DN, [6,120, 37,137, 61,146, 85,156, 106,172, 131,188, 141,200, 165,226, 173,240, 189,283, 204,315, 222,337, 253,388, 269,408, 285,428, 309,460, 325,473, 357,500, 389,534, 421,565, 445,593, 469,620, 493,645, 514,662, 535,672, 557,679]],
    [UP, [565,672, 582,659, 597,650, 613,645, 629,639, 645,632, 653,632]],
    [DN, [653,632, 678,633, 693,637, 725,642, 749,647, 757,647]],
    [UP, [757,647, 773,644, 797,637, 813,632, 837,629, 861,628, 893,622, 909,613, 925,598, 941,583, 957,565, 973,547, 989,530, 1013,507, 1029,499, 1045,495, 1061,486, 1085,474, 1101,465, 1125,456, 1149,450, 1173,447, 1197,448]],
    [DN, [1197,448, 1221,453, 1254,466, 1286,478, 1309,486, 1333,492, 1357,494, 1365,493]],
    [UP, [1365,493, 1389,492, 1405,486, 1421,478, 1454,472, 1485,465, 1517,456, 1549,450, 1573,450, 1613,448]],
    [DN, [1613,448, 1629,456, 1637,465]]
];
var stop = [5,90, 22,98, 41,110, 61,119, 84,130, 98,139, 110,148, 126,155, 141,166, 157,184, 175,205, 184,222, 200,259, 212,282, 229,313, 244,342, 257,364, 273,388, 290,413, 312,423, 327,437, 359,467, 400,509, 424,537, 449,567, 473,593, 498,618, 516,635, 535,647, 557,658, 565,699, 573,696, 582,690, 590,682, 612,676, 621,671, 645,661, 653,659, 661,608, 686,613, 717,618, 741,626, 757,628, 765,673, 796,665, 813,656, 837,654, 861,653, 893,645, 917,635, 933,620, 965,588, 989,557, 1013,532, 1029,523, 1053,517, 1077,506, 1101,491, 1125,482, 1147,476, 1169,470, 1197,468, 1205,431, 1221,435, 1254,450, 1286,464, 1325,475, 1349,481, 1365,481, 1373,506, 1397,505, 1429,494, 1471,487, 1507,477, 1549,466, 1597,462, 1613,463, 1621,434, 1637,439];

var adxMain = [5,866, 13,869, 22,877, 29,883, 37,886, 45,886, 55,883, 73,882, 86,883, 98,888, 109,894, 122,892, 133,892, 149,900, 165,904, 181,912, 199,913, 205,909, 216,897, 229,889, 255,888, 263,885, 282,882, 292,883, 308,886, 316,884, 327,876, 339,874, 357,874, 372,885, 396,887, 412,892, 445,904, 478,905, 502,908, 510,905, 522,895, 535,882, 557,862, 565,847, 573,837, 588,829, 598,829, 612,839, 640,844, 646,844, 660,857, 675,869, 693,878, 718,878, 740,885, 749,885, 758,877, 765,867, 775,859, 789,853, 799,847, 813,840, 824,844, 838,854, 850,863, 860,864, 875,859, 893,853, 909,839, 925,827, 949,815, 967,814, 982,815, 998,821, 1015,832, 1028,847, 1038,859, 1050,864, 1062,863, 1081,858, 1095,850, 1109,850, 1126,854, 1136,861, 1158,870, 1175,873, 1189,881, 1203,886, 1220,897, 1238,907, 1269,907, 1296,908, 1307,902, 1323,887, 1333,879, 1349,874, 1374,851, 1390,846, 1402,838, 1414,830, 1428,830, 1441,840, 1470,854, 1498,853, 1511,846, 1525,848, 1543,849, 1551,853, 1570,867, 1598,867, 1613,869, 1622,875, 1637,893];
var adxZone = [5,857, 22,863, 35,868, 55,870, 84,873, 106,881, 133,882, 149,888, 165,892, 181,896, 199,900, 216,896, 233,893, 255,892, 282,887, 310,888, 331,882, 357,880, 372,883, 402,884, 445,894, 502,901, 518,897, 543,887, 557,880, 573,867, 594,858, 622,856, 648,852, 669,859, 697,866, 718,868, 740,873, 750,873, 767,867, 787,864, 813,855, 832,856, 854,860, 893,856, 922,844, 949,833, 979,827, 999,828, 1016,831, 1038,841, 1064,847, 1093,847, 1122,848, 1134,852, 1171,860, 1203,870, 1236,884, 1280,893, 1296,896, 1313,893, 1333,887, 1349,883, 1374,872, 1390,866, 1415,854, 1428,851, 1472,853, 1498,852, 1513,849, 1545,850, 1570,857, 1607,860, 1622,865, 1637,873];

function poly(pts, color, width, extra) {
    return '<polyline points="' + pts.join(' ') + '" fill="none" stroke="' + color + '" stroke-width="' + width + '" stroke-linejoin="round" ' + (extra || '') + '/>';
}
function rect(x, y, w, h, color) {
    return '<rect x="' + x + '" y="' + y + '" width="' + w + '" height="' + h + '" fill="' + color + '"/>';
}
function level(x1, y1, x2, y2, color, dash) {
    return '<path class="level" d="M' + x1 + ' ' + y1 + 'L' + x2 + ' ' + y2 + '" stroke="' + color + '" stroke-dasharray="' + (dash || 'none') + '"/>';
}
function text(x, y, cls, str, fill) {
    return '<text x="' + x + '" y="' + y + '" class="' + cls + '"' + (fill ? ' style="fill:' + fill + '"' : '') + '>' + str + '</text>';
}
function circle(x, y, r, color) {
    return '<circle cx="' + x + '" cy="' + y + '" r="' + r + '" fill="' + color + '"/>';
}
function arrow(x1, y1, x2, y2) {
    var a = Math.atan2(y2 - y1, x2 - x1), c = Math.cos(a), s = Math.sin(a);
    function p(d, n) { return (x2 - d * c - n * s) + ',' + (y2 - d * s + n * c) + ' '; }
    return '<path d="M' + x1 + ' ' + y1 + 'L' + p(14, 0) + '" stroke="#f00" stroke-width="3" stroke-linecap="round"/>' +
        '<polygon points="' + p(0, 0) + p(22, 8) + p(17, 0) + p(22, -8) + '" fill="#f00"/>';
}
function yAt(line, x) {
    for (var s = 0; s < line.length; s++) {
        var p = line[s][1];
        for (var i = 0; i + 3 < p.length; i += 2) {
            if (x >= p[i] && x <= p[i + 2]) {
                return p[i + 1] + (p[i + 3] - p[i + 1]) * (x - p[i]) / (p[i + 2] - p[i]);
            }
        }
    }
    return null;
}
function box(x1, y1, x2, y2, color, name) {
    var d = 'M' + x1 + ' ' + y1 + 'H' + x2 + 'M' + x1 + ' ' + y1 + 'V' + y2 + 'M' + x1 + ' ' + y2 + 'H' + x2 + 'M' + x2 + ' ' + y1 + 'V' + y2;
    return '<path class="level" d="' + d + '" stroke="' + color + '" stroke-dasharray="18 6"/>' +
        text(x1 + 2, y1 + 9, 'session', name);
}
function tag(x, y, str, color) {
    return level(x - 10, y + 6.5, x, y + 6.5, color) +
        '<rect class="level" x="' + (x + .5) + '" y="' + (y + .5) + '" width="41" height="12" stroke="' + color + '"/>' +
        text(x + 1, y + 11, 'price-tag', str, color);
}
function signal(x, y, dir) {
    var k = dir == 'up' ? -1 : 1;
    return '<path d="M' + x + ' ' + (y - 6 * k) + 'V' + (y + 5 * k) + 'M' + (x - 5) + ' ' + y + 'L' + x + ' ' + (y + 5 * k) + 'L' + (x + 5) + ' ' + y + '" fill="none" stroke="#ffd700" stroke-width="3"/>';
}
function cross(x, y, color) {
    return '<path d="M' + (x - 2) + ' ' + (y - 2) + 'l4 4m0 -4l-4 4" stroke="' + color + '" stroke-width="1.500"/>';
}

function drawPrice() {
    var i, x, out = '<g transform="translate(-5,-75)">';
    [[5, 557, 0], [557, 653, 1], [653, 757, 0], [757, 1197, 1], [1197, 1365, 0], [1365, 1613, 1], [1613, 1637, 0]].forEach(function(b) {
        out += rect(b[0], 75, b[1] - b[0], 740, b[2] ? '#030228' : '#2c0404');
    });

    // horizontal levels
    out += level(5, 94.5, 1653, 94.5, '#c71585', '4 3') + level(85, 185.5, 1653, 185.5, '#c71585', '4 3');
    out += level(102, 486.5, 1900, 486.5, '#006400', '9 6 3 6');
    out += level(5, 564.5, 1900, 564.5, '#8b0000', '9 6 3 6') + level(5, 696.5, 1900, 696.5, '#8b0000', '9 6 3 6');
    out += level(5, 634.5, 1900, 634.5, '#dc143c');
    out += level(5, 247.5, 37, 247.5, '#00bfff', '3 2') + level(77, 226.5, 85, 226.5, '#00bfff', '3 2');
    out += level(285, 542.5, 325, 542.5, '#c71585', '3 2') + level(365, 537.5, 565, 537.5, '#c71585', '3 2');
    out += level(661, 557.5, 900, 557.5, '#c71585', '3 2') + level(1181, 409.5, 1413, 409.5, '#c71585', '3 2');
    out += level(1541, 383.5, 1650, 383.5, '#c71585', '5 3');
    out += level(565, 785.5, 1653, 785.5, '#00bfff', '3 3') + level(757, 699.5, 1653, 699.5, '#00bfff', '3 3');
    out += level(1349, 527.5, 1628, 527.5, '#00bfff', '3 3') + level(1493, 459.5, 1556, 459.5, '#00bfff', '3 3');
    out += level(565.5, 75, 565.5, 810, '#808080', '8 3 3 3') + level(1333.5, 75, 1333.5, 810, '#808080', '4 3');

    // zone between the two averages
    for (i = 0; i < 205; i++) {
        x = FIRST + i * STEP;
        var f = yAt(fast, x), s = yAt(slow, x);
        if (f === null || s === null || Math.abs(f - s) < 14) continue;
        out += level(x, Math.min(f, s) + 5, x, Math.max(f, s) - 5, s < f ? '#dc143c' : '#1eb4ff');
    }
    slow.concat(fast).forEach(function(s) {
        out += poly(s[1], '#141e28', 6);
    });
    slow.concat(fast).forEach(function(s) {
        out += poly(s[1], s[0], 3);
    });

    var run = 0;
    for (i = 0; i < 205; i++) {
        if (i > barRuns[run][0]) run++;
        x = 4 + i * STEP;
        var b = bars.slice(i * 4, i * 4 + 4);
        out += rect(x, b[0], 3, b[1] - b[0], barRuns[run][1]) + rect(x - 1, b[2], 5, b[3] - b[2], barRuns[run][1]);
    }
    out += poly(stop, '#808080', 5) + poly(stop, '#ef9c2f', 3);

    out += poly([5,160, 453,785, 989,350, 1293,564, 1541,382, 1637,637], '#fff', 3);

    [[325,536], [565,514], [805,558], [1101,366]].forEach(function(d) { out += circle(d[0], d[1], 10.5, '#ff69b4'); });
    [[197,729], [669,721], [853,665], [1053,485]].forEach(function(d) { out += circle(d[0], d[1], 10.5, '#1e90ff'); });
    [[453,784,'#1e90ff',1], [989,349,'#ff69b4',1], [1293,564,'#1e90ff',0], [1541,382,'#ff69b4',0], [1637,637,'#1e90ff',1]].forEach(function(d) {
        if (d[3]) out += circle(d[0], d[1], 28, '#ffd700');
        out += circle(d[0], d[1], 20, d[2]) + circle(d[0], d[1], 10.5, '#fffafa');
    });

    out += level(141.5, 75, 141.5, 396, '#ef9c2f', '18 6') + level(5, 396.5, 142, 396.5, '#ef9c2f', '18 6');
    out += box(117.5, 224.5, 397.5, 730.5, '#4682b4', 'London') + box(245.5, 537.5, 557.5, 785.5, '#3cb371', 'NY');
    out += box(629.5, 519.5, 909.5, 722.5, '#ef9c2f', 'Tokyo') + box(885.5, 351.5, 1165.5, 620.5, '#4682b4', 'London');
    out += box(1013.5, 367.5, 1325.5, 565.5, '#3cb371', 'NY') + box(1397.5, 383.5, 1637.5, 639.5, '#ef9c2f', 'Tokyo');

    out += tag(96, 176, '141.709', '#ffa500') + tag(320, 652, '139.149', '#00ffff') + tag(672, 542, '139.740', '#ffa500');
    out += tag(1456, 470, '140.126', '#00ffff') + tag(1616, 411, '140.143', '#ffa500');
    out += cross(85, 185, '#c71585') + cross(285, 542, '#c71585') + cross(365, 537, '#c71585') + cross(1181, 409, '#c71585') + cross(661, 558, '#c71585');
    out += cross(77, 226, '#00bfff') + cross(565, 785, '#00bfff') + cross(757, 699, '#00bfff') + cross(1493, 459, '#00bfff') + cross(325, 657, '#00bfff') + cross(1349, 527, '#00bfff');
    out += signal(365, 563) + signal(661, 551) + signal(1205, 409) + signal(1621, 418);
    [[565, 739], [765, 694], [877, 649], [1093, 463], [1373, 522]].forEach(function(s) { out += signal(s[0], s[1], 'up'); });

    out += text(11, 562, 'order-tag', '#89719393 sl') + text(11, 694, 'order-tag', '#89719393 tp');
    out += text(573, 799, 'day', 'Monday') + text(1341, 799, 'day', 'Tuesday');
    [['78.6%', 169], ['61.8%', 247], ['38.2%', 356], ['21.4%', 433], ['21.4%', 631], ['38.2%', 708]].forEach(function(f) {
        out += text(1666, f[1], 'fib', f[0]);
    });
    out += text(1673, 486, 'fib strong', 'BUY', '#00ffff') + text(1659, 532, 'fib', 'OPEN DN', '#dc143c') + text(1669, 578, 'fib', 'SELL', '#ff69b4');
    out += '<path d="M1642 75h9l-4.500 5z" fill="#dc143c"/>';

    // trade and notes
    out += poly([1628,486, 1637,634], '#f00', 3);
    out += '<path d="M1622 486l5-4 5 4-5 4z" fill="#f00" stroke="#fff"/><path d="M1634 634l6-4v8z" fill="#f00"/>';
    out += '<ellipse cx="1621" cy="418.500" rx="21" ry="23" fill="none" stroke="#f00" stroke-width="2" stroke-dasharray="8 4"/>';
    out += poly([1504,360, 1673,432], '#ff0', 3, 'stroke-dasharray="9 4"');
    out += arrow(900, 266, 961, 313) + arrow(1535, 300, 1534, 347) + arrow(1746, 491, 1646, 440);
    out += arrow(1517, 542, 1613, 494) + arrow(1715, 600, 1657, 573) + arrow(1511, 752, 1603, 709);
    out += text(892, 247, 'note', 'Major Semaphore') + text(1532, 282, 'note', '2nd Dot') + text(1802, 508, 'note', 'Sell Signal');
    out += text(1441, 550, 'note', 'Entry at opening') + text(1441, 569, 'note', 'of candle AFTER') + text(1441, 587, 'note', 'sell signal candle');
    out += text(1787, 601, 'note small', 'SL moved into profit') + text(1787, 616, 'note small', 'w/ trailing stop');
    out += text(1414, 732, 'note small', 'TP - 1st Liquidity Line') + text(1414, 747, 'note small', 'which just happens to be') + text(1414, 762, 'note small', 'at the 38.2 Fib :-)');
    document.getElementById('price').innerHTML = out + '</g>';
}

function drawAdx() {
    var out = '<g transform="translate(-5,-806)">';
    [838.5, 864.5, 890.5].forEach(function(y) { out += level(5, y, 1900, y, '#3f6486', '5 3'); });
    out += level(1333.5, 806, 1333.5, 925, '#808080', '4 3');
    out += poly(adxMain, '#ffd700', 2, 'shape-rendering="crispEdges"');
    out += '<g transform="translate(0,2)">' + poly(adxZone, '#dc143c', 1, 'shape-rendering="crispEdges"') + '</g>';
    out += poly(adxZone, '#1e90ff', 1, 'shape-rendering="crispEdges"');
    [[21, PURPLE], [565, BLUE], [701, PURPLE], [765, BLUE], [1181, PURPLE], [1389, BLUE], [1621, PURPLE]].forEach(function(v) {
        out += rect(v[0] - 1, 807, 3, 113, v[1]);
    });
    out += poly([1516,838, 1621,863], '#ff0', 3, 'stroke-dasharray="9 4"') + arrow(1678, 833, 1592, 844);
    out += text(1748, 831, 'note', 'Hidden bearish') + text(1748, 850, 'note', 'divergence');
    document.getElementById('adx').innerHTML = out + '</g>';
}

function drawStripe(id, height, runs) {
    var out = '', run = 0;
    for (var i = 0; i < 205; i++) {
        if (i > runs[run][0]) run++;
        out += rect(i * STEP - 3, 0, 7, height, runs[run][1]);
    }
    document.getElementById(id).innerHTML = out;
}

function fillSymbols() {
    var names = 'AUDCAD AUDCHF AUDJPY AUDNZD AUDUSD CADCHF CADJPY CHFJPY EURAUD EURCAD EURCHF EURGBP EURJPY EURNZD EURUSD GBPAUD GBPCAD GBPCHF GBPJPY GBPNZD GBPUSD NZDCAD NZDCHF NZDJPY NZDUSD USDCAD USDCHF USDJPY XAUUSD US30 US500 US2000 DXY_Z2 VIX_X2'.split(' ');
    document.getElementById('symbols').innerHTML = names.map(function(n) {
        return '<button' + (n == 'USDJPY' ? ' class="current"' : '') + '>' + n + '</button>';
    }).join('');
}

function fillTimes() {
    var out = '<span>11 Nov 2022</span>', day = 11, hour = 8;
    for (var i = 0; i < 25; i++) {
        out += '<span>' + day + ' Nov ' + (hour < 10 ? '0' : '') + hour + ':30</span>';
        hour += 2;
        if (hour > 23) {
            hour = 0;
            day = day == 11 ? 14 : 15;
        }
    }
    document.getElementById('times').innerHTML = out;
}

drawPrice();
drawAdx();
drawStripe('stripe1', 26, [[1, BLUE], [69, PURPLE], [150, BLUE], [173, PURPLE], [202, BLUE], [204, PURPLE]]);
drawStripe('stripe2', 24, [[113, PURPLE], [159, BLUE], [173, PURPLE], [201, BLUE], [204, PURPLE]]);
fillSymbols();
fillTimes();
```
